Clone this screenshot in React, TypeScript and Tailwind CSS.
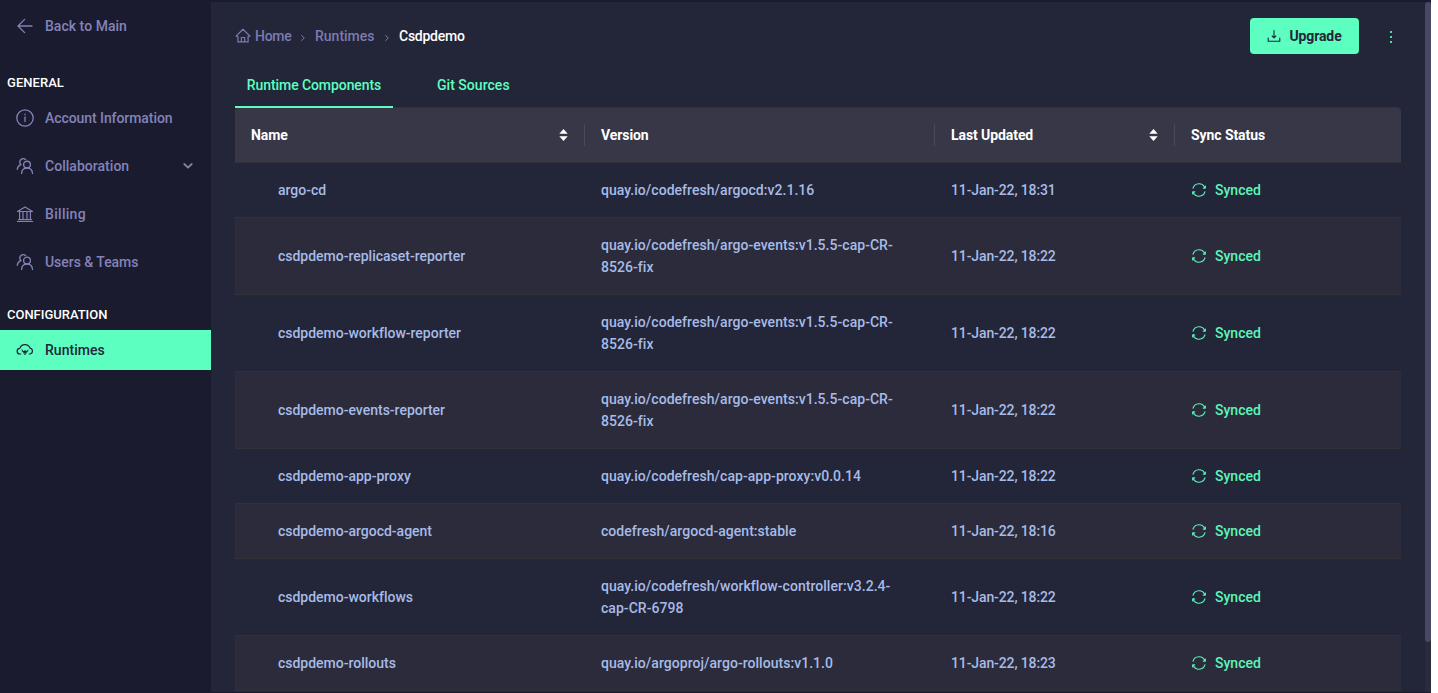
import type { ReactNode } from "react";

type IconProps = { className?: string };

const Svg = ({ className, children, size = 18, sw = 1.1 }: { className?: string; children: ReactNode; size?: number; sw?: number }) => (
  <svg width={size} height={size} viewBox={`0 0 ${size} ${size}`} fill="none" stroke="currentColor" strokeWidth={sw} strokeLinecap="round" strokeLinejoin="round" className={className}>
    {children}
  </svg>
);

const BackIcon = () => (
  <Svg sw={1.3}>
    <path d="M16 9H2.3M8.6 2.4 2 9l6.6 6.6" />
  </Svg>
);

const InfoIcon = () => (
  <Svg sw={1.3}>
    <circle cx="9" cy="9" r="8.2" />
    <path d="M9 8v4.6" />
    <path d="M9 5.2v.5" />
  </Svg>
);

const PeopleIcon = () => (
  <Svg sw={1.35}>
    <circle cx="11" cy="7.6" r="3.4" />
    <path d="M5.6 16.4c0-3 2-5.4 5.4-5.4s5.5 2.4 5.5 5.4" />
    <path d="M9.6 2.6A3.3 3.3 0 1 0 4.9 7.6C2.8 8.4 1.5 10 1.3 12.3" />
  </Svg>
);

const BankIcon = () => (
  <Svg sw={1.2}>
    <path d="M1.5 6.5 9 2l7.5 4.5zM1.4 16.5h15.2M2.5 14.7h13" />
    <path d="M3.6 6.5v8M7 6.5v8M11 6.5v8M14.4 6.5v8" />
  </Svg>
);

const CloudIcon = () => (
  <Svg sw={1.2}>
    <path d="M4.8 13H4.100a2.800 2.800 0 0 1-.3-5.600A5.400 5.400 0 0 1 14 7.100a3 3 0 0 1 0 5.900h-.8" />
    <path d="M5.800 8.800c.2 2 1.200 3.100 3.200 3.300 2-.2 3-1.300 3.200-3.300L10.500 10.200 9 9.400 7.500 10.200zM8 12.800l1 1.200 1-1.200z" fill="currentColor" strokeWidth=".4" />
  </Svg>
);

const HomeIcon = () => (
  <Svg size={16} sw={1.2}>
    <path d="M1 8.1 8 1.3l7 6.800M1 8.100l1.900.2v5.600h10.200V8.300l1.900-.2M6.300 13.800V9.500h3.400v4.300" />
  </Svg>
);

const DownloadIcon = () => (
  <Svg size={14} sw={1.1}>
    <path d="M7 1.500v7.200M5.200 7 7 8.800 8.800 7M1.200 9v3.200h11.600V9" />
  </Svg>
);

const SyncIcon = () => (
  <Svg size={16} sw={1.2}>
    <path d="M2.100 6.100a6.200 6.200 0 0 1 11.600-.6M13.900 9.900a6.200 6.200 0 0 1-11.600.6" />
    <path d="M14.300 4v2.100h-2M1.700 12V9.900h2" />
  </Svg>
);

const SortIcon = ({ className }: IconProps) => (
  <svg width="10" height="14" viewBox="0 0 10 14" fill="#fff" className={className}>
    <path d="M5.500 1 9.700 5.800H1.300zM5.500 13 1.300 8.200h8.400z" />
  </svg>
);

const Crumb = () => (
  <svg width="6" height="8" viewBox="0 0 6 8" fill="none" stroke="#7b7bae" className="mt-1">
    <path d="m1.300 1.200 3 2.800-3 2.800" />
  </svg>
);

const NavItem = ({ icon, children, active, chevron, tracking = "tracking-[0.03px]" }: { icon: ReactNode; children: ReactNode; active?: boolean; chevron?: boolean; tracking?: string }) => (
  <div className={`flex h-10 items-center pl-4 ${active ? "bg-[#5cffc0] text-[#20263a]" : "text-[#8383b8]"}`}>
    {icon}
    <span className={`ml-[11px] flex-1 ${tracking}`}>{children}</span>
    {chevron && (
      <svg width="10" height="8" viewBox="0 0 10 8" fill="none" stroke="#838791" strokeWidth="1.7" strokeLinecap="round" className="mr-[18px] mb-px">
        <path d="m1.200 2 3.800 3.500L8.800 2" />
      </svg>
    )}
  </div>
);

const rows = [
  { name: "argo-cd", version: ["quay.io/codefresh/argocd:v2.1.16"], date: "11-Jan-22, 18:31" },
  { name: "csdpdemo-replicaset-reporter", version: ["quay.io/codefresh/argo-events:v1.5.5-cap-CR-", "8526-fix"], date: "11-Jan-22, 18:22" },
  { name: "csdpdemo-workflow-reporter", version: ["quay.io/codefresh/argo-events:v1.5.5-cap-CR-", "8526-fix"], date: "11-Jan-22, 18:22" },
  { name: "csdpdemo-events-reporter", version: ["quay.io/codefresh/argo-events:v1.5.5-cap-CR-", "8526-fix"], date: "11-Jan-22, 18:22" },
  { name: "csdpdemo-app-proxy", version: ["quay.io/codefresh/cap-app-proxy:v0.0.14"], date: "11-Jan-22, 18:22" },
  { name: "csdpdemo-argocd-agent", version: ["codefresh/argocd-agent:stable"], date: "11-Jan-22, 18:16" },
  { name: "csdpdemo-workflows", version: ["quay.io/codefresh/workflow-controller:v3.2.4-", "cap-CR-6798"], date: "11-Jan-22, 18:22" },
  { name: "csdpdemo-rollouts", version: ["quay.io/argoproj/argo-rollouts:v1.1.0"], date: "11-Jan-22, 18:23" },
];

const columns = [
  { label: "Name", sort: true },
  { label: "Version" },
  { label: "Last Updated", sort: true },
  { label: "Sync Status" },
];

export default function App() {
  return (
    <div className="h-[693px] w-[1438px] overflow-hidden bg-white font-['Roboto','Liberation_Sans',sans-serif] text-sm leading-[22px] font-medium">
      <div className="flex h-full w-[1431px] bg-[#1a1b2e]">
        <aside className="w-[211px] shrink-0 pt-1.5">
          <NavItem icon={<BackIcon />}>Back to Main</NavItem>
          <h2 className="mt-[27px] pl-[7px] text-[13px] leading-5 tracking-[0.05px] text-white">GENERAL</h2>
          <nav className="mt-[5px] flex flex-col gap-2">
            <NavItem icon={<InfoIcon />} tracking="tracking-[-0.07px]">Account Information</NavItem>
            <NavItem icon={<PeopleIcon />} chevron>Collaboration</NavItem>
            <NavItem icon={<BankIcon />} tracking="tracking-[0.3px]">Billing</NavItem>
            <NavItem icon={<PeopleIcon />} tracking="tracking-[-0.04px]">Users &amp; Teams</NavItem>
          </nav>
          <h2 className="mt-[23px] pl-[7px] text-[13px] leading-5 tracking-[-0.02px] text-white">CONFIGURATION</h2>
          <div className="mt-[5px]">
            <NavItem icon={<CloudIcon />} active>Runtimes</NavItem>
          </div>
        </aside>

        <div className="flex min-w-0 flex-1 py-0.5 pb-px">
          <main className="flex-1 overflow-hidden bg-[#232538] px-6">
            <header className="flex h-[68px] items-center justify-between">
              <div className="flex items-center text-[#7b7bb0]">
                <HomeIcon />
                <span className="ml-1 w-9 tracking-[-0.3px]">Home</span>
                <span className="flex w-6 justify-center"><Crumb /></span>
                <span className="w-[60px]">Runtimes</span>
                <span className="flex w-6 justify-center"><Crumb /></span>
                <span className="tracking-[-0.25px] text-white">Csdpdemo</span>
              </div>
              <div className="flex items-center">
                <button className="flex h-9 w-[109px] items-center justify-center gap-2 rounded bg-[#5cffc0] font-bold tracking-[-0.1px] text-[#232538]">
                  <DownloadIcon />
                  <span>Upgrade</span>
                </button>
                <svg width="4" height="14" viewBox="0 0 4 14" fill="#50d8a8" className="mt-0.5 mr-2 ml-[30px]">
                  <path d="M1 1h2v2H1zM1 6h2v2H1zM1 11h2v2H1z" />
                </svg>
              </div>
            </header>

            <div className="flex h-[38px] text-[#5cffc0]">
              <div className="flex w-[158px] justify-center border-b-2 border-[#5cffc0] pt-1 tracking-[-0.08px]">Runtime Components</div>
              <div className="ml-8 px-3 pt-1 tracking-[0.03px]">Git Sources</div>
            </div>

            <div className="-mt-px">
              <div className="grid h-14 grid-cols-[350px_350px_240px_226px] items-center rounded-t border-t border-b border-[#313136] bg-[#373748] font-bold tracking-[-0.08px] text-white">
                {columns.map((c, i) => (
                  <div key={c.label} className={`flex h-[22px] items-center justify-between pr-4 pl-4 ${i < 3 ? "border-r border-[#4a4a5b]" : ""}`}>
                    <span>{c.label}</span>
                    {c.sort && <SortIcon />}
                  </div>
                ))}
              </div>
              {rows.map((r, i) => (
                <div key={r.name} className={`grid grid-cols-[350px_350px_240px_226px] items-center border-b border-[#313136] py-4 text-[#a7bbe6] ${i % 2 ? "bg-[#2b2b3c]" : "bg-[#232538]"}`}>
                  <div className="pl-[43px] tracking-[-0.01px]">{r.name}</div>
                  <div className="pl-4 tracking-[0.04px]">
                    {r.version.map((line) => (
                      <div key={line} className="whitespace-nowrap">{line}</div>
                    ))}
                  </div>
                  <div className="pl-4 tracking-[-0.12px]">{r.date}</div>
                  <div className="flex items-center gap-2 pl-4 text-[#5cf5ba]">
                    <SyncIcon />
                    <span>Synced</span>
                  </div>
                </div>
              ))}
            </div>
          </main>
          <div className="w-1.5 shrink-0 bg-[#2b2b3c]">
            <div className="h-[640px] rounded-full bg-[#484865]" />
          </div>
        </div>
      </div>
    </div>
  );
}
